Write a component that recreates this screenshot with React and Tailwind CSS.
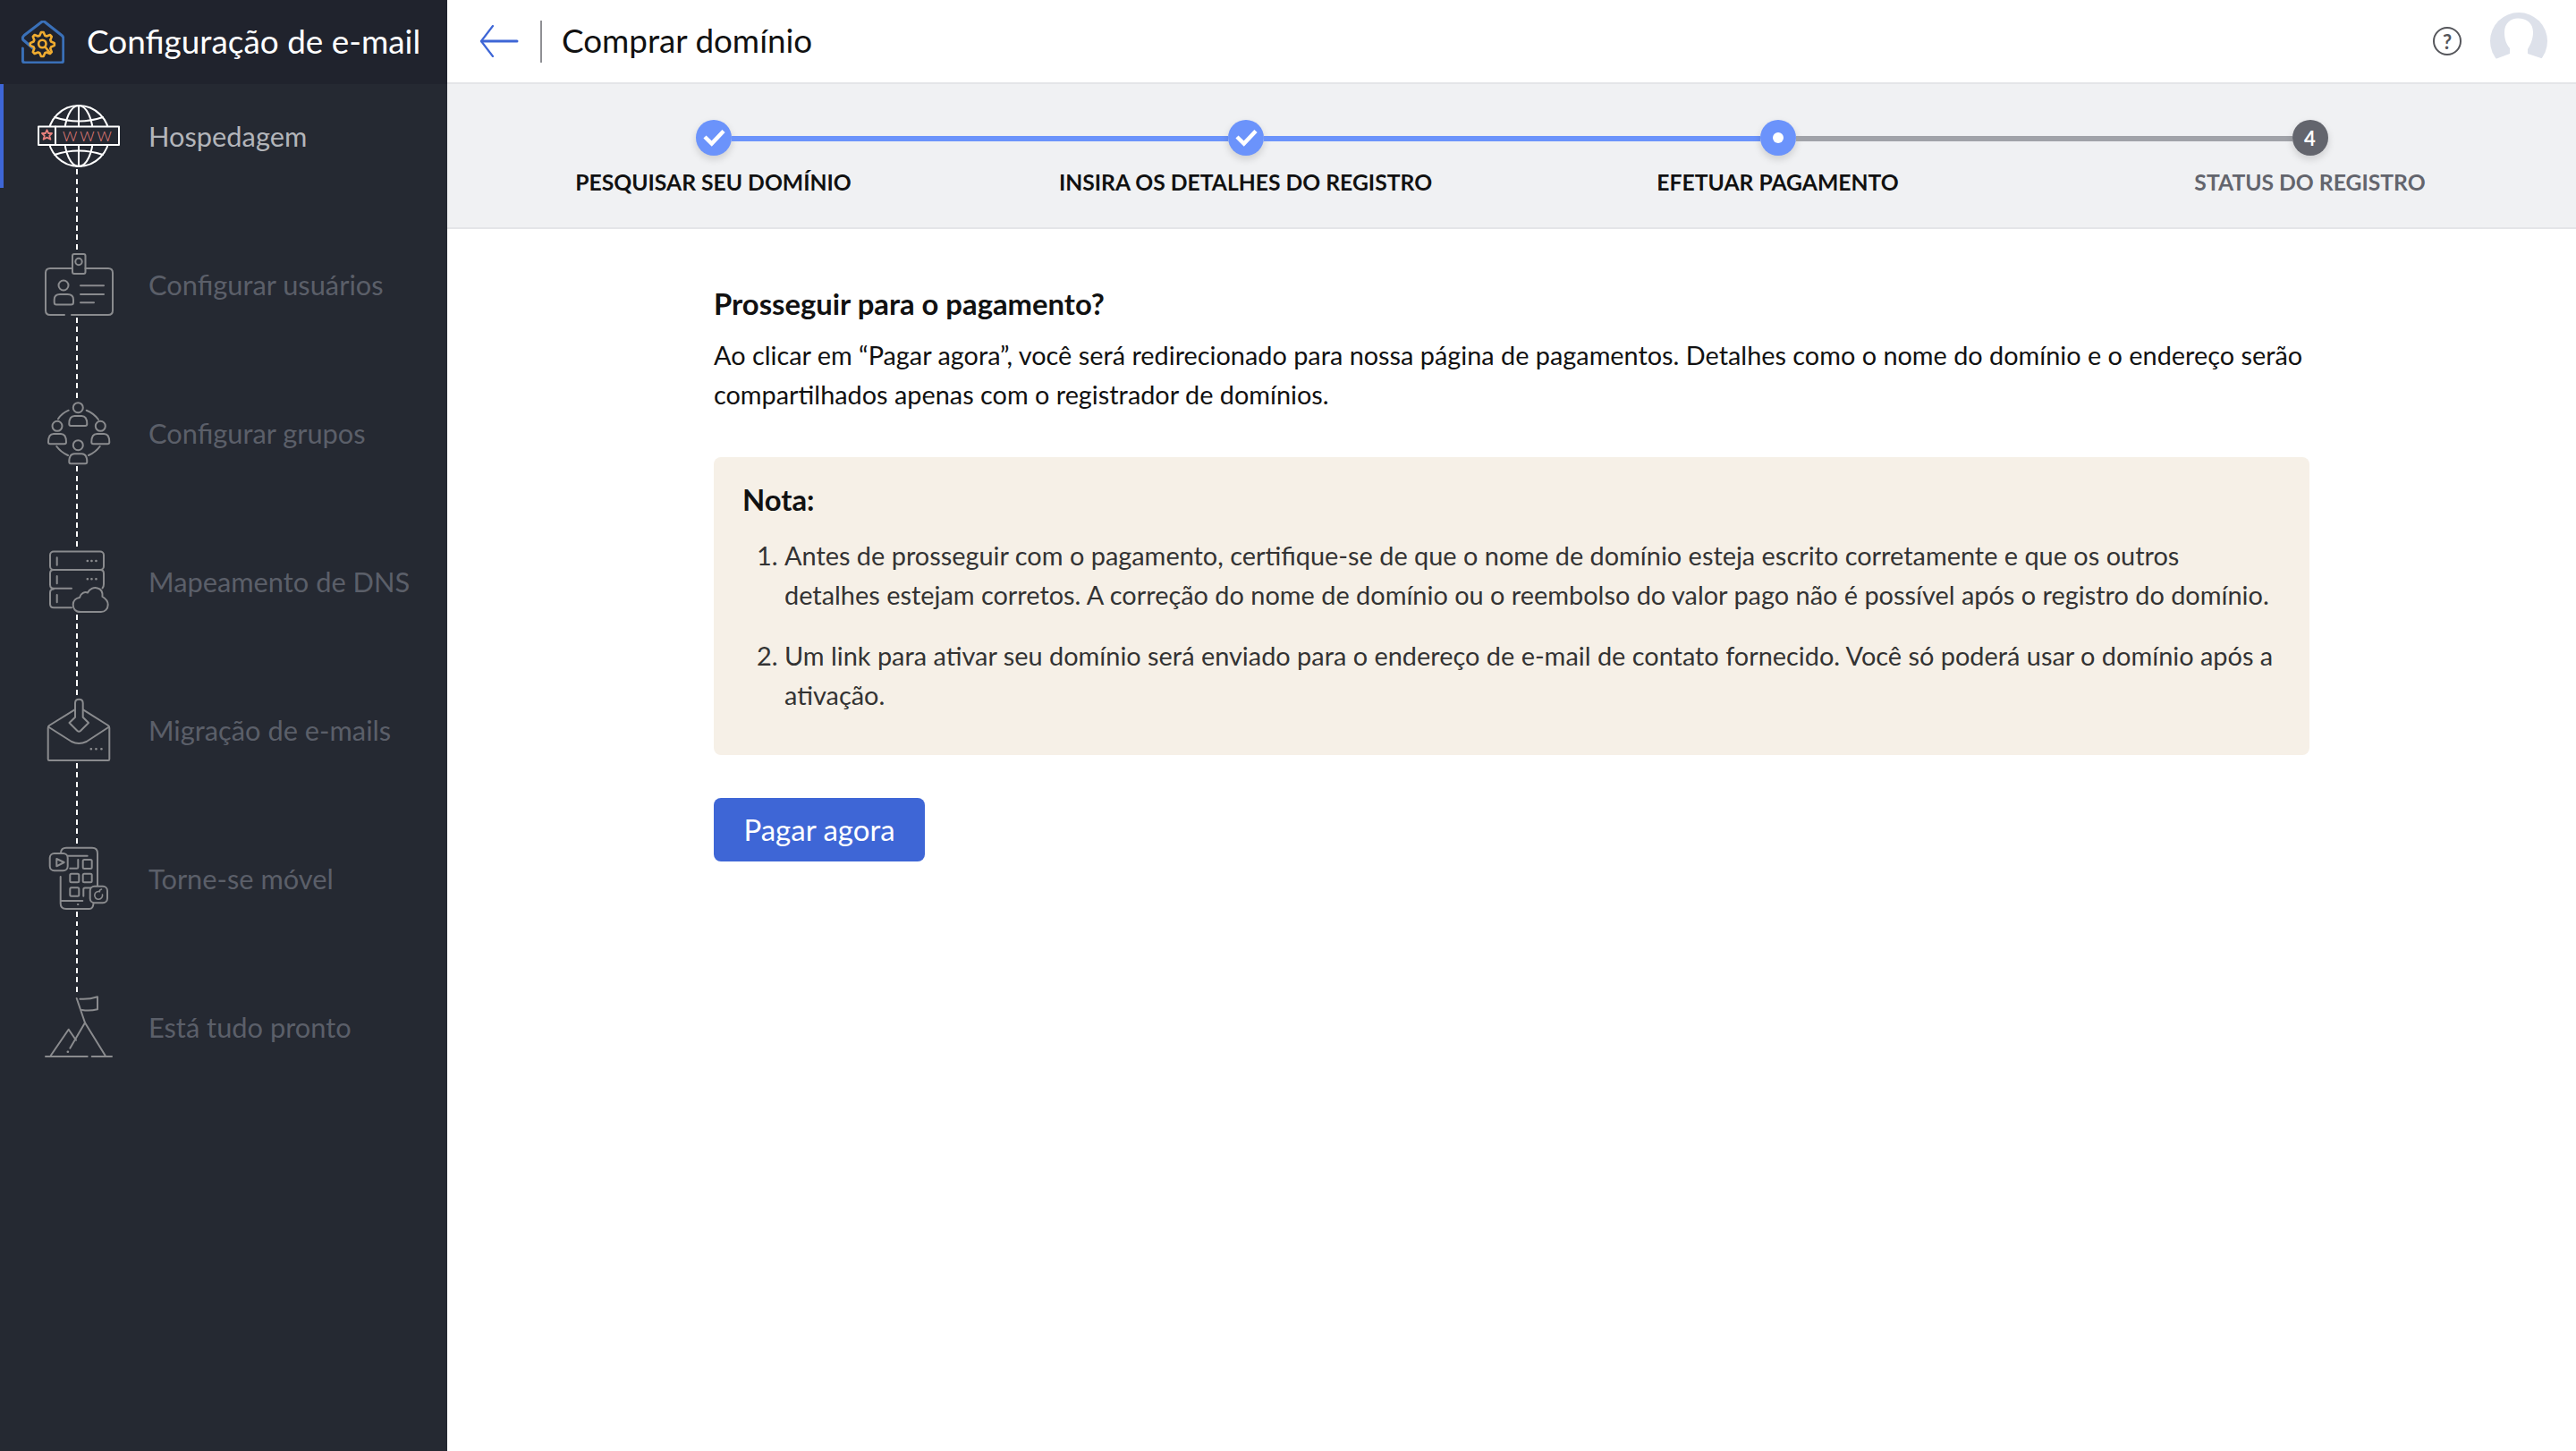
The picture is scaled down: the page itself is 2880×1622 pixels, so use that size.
import React from "react";

const GREY = "#8a8b8e";

function gearPath(cx, cy, rOuter, rInner, teeth) {
  const pts = [];
  const n = teeth * 4;
  for (let i = 0; i < n; i++) {
    const a = (i / n) * Math.PI * 2 - Math.PI / 2 - Math.PI / n;
    const r = i % 4 < 2 ? rOuter : rInner;
    pts.push([cx + r * Math.cos(a), cy + r * Math.sin(a)]);
  }
  return "M" + pts.map((p) => p[0].toFixed(2) + " " + p[1].toFixed(2)).join("L") + "Z";
}

function Logo() {
  return (
    <svg width="48" height="48" viewBox="0 0 48 48" fill="none" className="shrink-0">
      <path d="M1.4 31V44.5Q1.4 47 4 47H44Q46.8 47 46.8 44.5V20Q46.8 18 45 16.5L26 1.5Q24.3 0.4 22.6 1.5L3 16.5Q0.4 19 1.8 21.5L13.5 31.5" stroke="#3a70b8" strokeWidth="3" strokeLinecap="round" strokeLinejoin="round" />
      <path d={gearPath(23.3, 26.5, 13.6, 10.2, 8)} stroke="#f0ac30" strokeWidth="2.6" strokeLinejoin="round" />
      <circle cx="23.3" cy="26" r="4.2" stroke="#f0ac30" strokeWidth="2.6" />
      <path d="M26.5 29.5L31 35" stroke="#f0ac30" strokeWidth="2.6" strokeLinecap="round" />
    </svg>
  );
}

function Svg({ children, stroke = GREY }) {
  return (
    <svg width="100" height="72" viewBox="0 0 100 72" fill="none" stroke={stroke} strokeWidth="2" strokeLinecap="round" strokeLinejoin="round" className="shrink-0">
      {children}
    </svg>
  );
}

function Person({ cx, hy, x1, x2, y1, y2 }) {
  return (
    <>
      <circle cx={cx} cy={hy} r="5.5" />
      <path d={`M${x1 + 6} ${y1}H${x2 - 6}Q${x2} ${y1} ${x2} ${y2 - 2}Q${x2} ${y2} ${x2 - 2} ${y2}H${x1 + 2}Q${x1} ${y2} ${x1} ${y2 - 2}Q${x1} ${y1} ${x1 + 6} ${y1}Z`} />
    </>
  );
}

function IconGlobe() {
  const pink = "#e8807c";
  return (
    <Svg stroke="#ffffff">
      <circle cx="51" cy="36" r="34" />
      <ellipse cx="51" cy="36" rx="16" ry="34" />
      <path d="M51 2V70" />
      <path d="M24 15Q51 24 78 15" />
      <path d="M24 57Q51 48 78 57" />
      <path d="M17 36H85" />
      <rect x="6" y="25.5" width="90" height="20.5" fill="#252932" />
      <path d="M25 25.5V46" />
      <path d={"M15.5 29.3L17.2 33H21L18.2 35.8L19.4 39.8L15.5 37.6L11.6 39.8L12.8 35.8L10 33H13.8Z"} stroke={pink} strokeWidth="1.8" />
      <text x="33" y="42" fill={pink} stroke="none" fontFamily="Lato, sans-serif" fontSize="16" fontWeight="300" letterSpacing="3">WWW</text>
    </Svg>
  );
}

function IconUser() {
  return (
    <Svg>
      <path d="M44 18H19Q14 18 14 23V65Q14 70 19 70H35M43 70H84Q89 70 89 65V23Q89 18 84 18H58.5" />
      <rect x="44" y="2" width="14.5" height="22" rx="2" />
      <circle cx="51" cy="10.5" r="3.7" />
      <circle cx="34" cy="37" r="5.5" />
      <path d="M30 47H38.5Q45 47 45 53V56Q45 58.5 42.5 58.5H26Q23.7 58.5 23.7 56V53Q23.7 47 30 47Z" />
      <path d="M53 37.3H79M53 47H79M53 56.3H68" />
    </Svg>
  );
}

function IconGroup() {
  return (
    <Svg>
      <Person cx={50.3} hy={7.7} x1={40.3} x2={60.3} y1={17} y2={28} />
      <Person cx={27} hy={28.3} x1={17} x2={37} y1={37} y2={48.3} />
      <Person cx={75.3} hy={28.3} x1={65.3} x2={85.3} y1={37} y2={48.3} />
      <Person cx={50.3} hy={49.7} x1={40.3} x2={60.3} y1={59.3} y2={70.3} />
      <path d="M39.7 10.7Q32 14 28 20.3M59.7 10.7Q68 14 73 21M26.3 51Q31 57.5 39 61M74.7 51Q70 57.5 62 61" />
    </Svg>
  );
}

function IconDns() {
  return (
    <Svg>
      <rect x="19" y="2.5" width="60" height="20.5" rx="4" />
      <path d="M23 23H75Q79 23 79 27V39Q79 42 77.5 43.5M23 23Q19 23 19 27V39.5Q19 43.7 23 43.7H43" />
      <path d="M43 65.3H23Q19 65.3 19 61.3V48.5Q19 44.5 23 44.5" />
      <path d="M26.7 9.3V17.7M26.7 30V38.3M26.7 51V59.3" />
      <path d="M60.7 13H61M65.3 13H65.6M70.3 13H70.6M60.7 33.3H61M65.3 33.3H65.6M70.3 33.3H70.6" strokeWidth="2.4" />
      <path d="M53 70C47 70 44.7 66 44.7 62C44.7 57.5 48 54.5 52 54C53 49 58 47 61 48.5C63 44.5 68 42 72 43.5C76 44.5 78 48 77.5 53C81 55 83.7 58 83.7 62C83.7 67 80 70 76 70Z" />
    </Svg>
  );
}

function IconMail() {
  return (
    <Svg>
      <path d="M46.5 13.3L18 31Q16.7 32 16.7 34V68.5Q16.7 70 18 70H84Q85.3 70 85.3 68.5V34Q85.3 32 84 31L56 13.3" />
      <path d="M17 32.5L43 49Q51 53 59.7 49L85 32.5" />
      <path d="M47 21.7V6Q47 1.7 51.3 1.7Q55.7 1.7 55.7 6V21.7L62 28L53 37Q51.3 38.5 49.5 37L40.5 28Z" />
      <path d="M64.7 57.3H65M70.3 57.3H70.6M76.3 57.3H76.6" strokeWidth="2.4" />
    </Svg>
  );
}

function IconMobile() {
  return (
    <Svg>
      <path d="M31 7Q31.5 1.7 37 1.7H66Q72 1.7 72 8V44" />
      <path d="M30.7 34V64Q30.7 70 37 70H63Q67 70 67.5 64" />
      <path d="M34.7 10.7H60.7M31 61H55.3" />
      <path d="M50 65H50.3" strokeWidth="2.2" />
      <rect x="18.7" y="8" width="20" height="19.3" rx="5" fill="#252932" />
      <path d="M26.3 14V22.3L34.7 18Z" />
      <rect x="55.7" y="15" width="10" height="10" rx="1.5" />
      <path d="M50.3 15V23.5Q50.3 24.7 49 24.7H41.3" />
      <rect x="41.3" y="30.7" width="10" height="9.5" rx="1.5" />
      <rect x="55.7" y="30.7" width="10" height="9.5" rx="1.5" />
      <rect x="41.3" y="46.3" width="10" height="9.5" rx="1.5" />
      <path d="M56.3 55.7V48Q56.3 46.5 58 46.5H65" />
      <rect x="63.7" y="44.7" width="19.3" height="18.6" rx="5" fill="#252932" />
      <path d="M74.5 50.7A4.4 4.4 0 1 0 77.5 54M74 50.5Q74.5 48.5 76.5 48" strokeWidth="1.6" />
    </Svg>
  );
}

function IconFlag() {
  return (
    <Svg>
      <path d="M14 69H60.7M65.7 69H88" />
      <path d="M48.7 4L58 31.3" />
      <path d="M52.3 4.7Q62 5.5 72 2.3V16.3Q63 18.5 54.7 17" />
      <path d="M41.3 59.7L58 31.3L80.7 68" />
      <path d="M38.7 63.7H39" strokeWidth="2.4" />
      <path d="M19.7 68L39.7 38.7L48 50.7" />
    </Svg>
  );
}

const items = [
  { label: "Hospedagem", Icon: IconGlobe, active: true },
  { label: "Configurar usuários", Icon: IconUser },
  { label: "Configurar grupos", Icon: IconGroup },
  { label: "Mapeamento de DNS", Icon: IconDns },
  { label: "Migração de e-mails", Icon: IconMail },
  { label: "Torne-se móvel", Icon: IconMobile },
  { label: "Está tudo pronto", Icon: IconFlag, last: true },
];

function NavItem({ label, Icon, active, last }) {
  return (
    <div className="relative flex h-[166px]">
      {active && <div className="absolute left-0 top-[-22px] h-[116px] w-1 bg-[#3e66d6]" />}
      <div className="ml-[37px] flex w-[100px] flex-col items-center">
        <Icon />
        {!last && (
          <div className="mb-[3px] w-[2px] flex-1 translate-x-[-1px] bg-[repeating-linear-gradient(to_bottom,transparent_0,transparent_1px,#ffffff_1px,#ffffff_7px,transparent_7px,transparent_10.5px)]" />
        )}
      </div>
      <div className={`ml-[29px] flex h-[74px] items-center text-[30.8px] ${active ? "text-[#b3b5ba]" : "text-[#5b5f69]"}`}>{label}</div>
    </div>
  );
}

const steps = [
  { label: "PESQUISAR SEU DOMÍNIO", state: "done", left: "", right: "bg-[#6b93fb]" },
  { label: "INSIRA OS DETALHES DO REGISTRO", state: "done", left: "bg-[#6b93fb]", right: "bg-[#6b93fb]" },
  { label: "EFETUAR PAGAMENTO", state: "current", left: "bg-[#6b93fb]", right: "bg-[#a0a2a8]" },
  { label: "STATUS DO REGISTRO", state: "todo", left: "bg-[#a0a2a8]", right: "" },
];

function StepCircle({ state }) {
  if (state === "done") {
    return (
      <div className="flex h-10 w-10 shrink-0 items-center justify-center rounded-full bg-[#6b93fb] shadow-[0_4px_8px_rgba(0,0,0,0.15)]">
        <svg width="40" height="40" viewBox="0 0 40 40" fill="none">
          <path d="M10 19L17.7 26.5L31 12.5" stroke="#fff" strokeWidth="4.5" />
        </svg>
      </div>
    );
  }
  if (state === "current") {
    return (
      <div className="flex h-10 w-10 shrink-0 items-center justify-center rounded-full bg-[#6b93fb] shadow-[0_4px_8px_rgba(0,0,0,0.15)]">
        <div className="h-3 w-3 rounded-full bg-white" />
      </div>
    );
  }
  return (
    <div className="flex h-10 w-10 shrink-0 items-center justify-center rounded-full bg-[#63656d] text-[22px] font-bold text-white shadow-[0_4px_8px_rgba(0,0,0,0.15)]">4</div>
  );
}

function Step({ label, state, left, right }) {
  return (
    <div className="flex flex-col items-center">
      <div className="flex w-full items-center">
        <div className={`mt-[2px] h-[6px] flex-1 ${left}`} />
        <StepCircle state={state} />
        <div className={`mt-[2px] h-[6px] flex-1 ${right}`} />
      </div>
      <div className={`mt-[12px] h-9 text-[24.7px] font-bold leading-9 ${state === "todo" ? "text-[#63656d]" : "text-[#111]"}`}>{label}</div>
    </div>
  );
}

export default function App() {
  return (
    <div className="flex h-screen w-full overflow-hidden bg-white font-['Lato',sans-serif]">
      <aside className="flex w-[500px] shrink-0 flex-col bg-[#252932]">
        <div className="flex h-[94px] items-center gap-[25px] bg-[#20232d] pl-[24px]">
          <Logo />
          <span className="text-[36.9px] text-white">Configuração de e-mail</span>
        </div>
        <nav className="pt-[22px]">
          {items.map((it) => (
            <NavItem key={it.label} {...it} />
          ))}
        </nav>
      </aside>
      <main className="flex min-w-0 flex-1 flex-col">
        <header className="flex h-[94px] items-center border-b-2 border-[#e4e5e8] pr-[32px] pl-[36px]">
          <svg width="44" height="36" viewBox="0 0 44 36" fill="none" className="shrink-0">
            <path d="M15 1L2 18L15 35" stroke="#3e66d6" strokeWidth="2.2" strokeLinecap="round" strokeLinejoin="round" />
            <path d="M2.5 18H42" stroke="#3e66d6" strokeWidth="3" strokeLinecap="round" />
          </svg>
          <div className="ml-[24px] h-[47px] w-[2px] bg-[#8f9094]" />
          <h1 className="ml-[22px] text-[36.8px] text-[#111]">Comprar domínio</h1>
          <div className="ml-auto flex h-8 w-8 items-center justify-center rounded-full border-2 border-[#55565b] text-[22px] font-bold text-[#55565b]">?</div>
          <svg width="64" height="64" viewBox="0 0 64 64" className="ml-[32px] shrink-0">
            <circle cx="32" cy="32" r="32" fill="#dde1ea" />
            <path d="M6 52L22 46V40C17 34 16 28 16 22C16 12 23 6.5 31 6.5C41 6.5 48 12 48 22C48 30 45 36 42 41V46L60 52V64H4V52Z" fill="#fff" />
          </svg>
        </header>
        <div className="grid h-[162px] grid-cols-4 border-b-2 border-[#e4e5e8] bg-[#f0f1f3] pt-[40px]">
          {steps.map((s) => (
            <Step key={s.label} {...s} />
          ))}
        </div>
        <div className="px-[298px] pt-[62px]">
          <h2 className="text-[32.8px] font-bold leading-[44px] text-[#111]">Prosseguir para o pagamento?</h2>
          <p className="mt-[13px] text-[28.85px] leading-[44px] text-[#111]">
            Ao clicar em “Pagar agora”, você será redirecionado para nossa página de pagamentos. Detalhes como o nome do domínio e o endereço serão compartilhados apenas com o registrador de domínios.
          </p>
          <div className="mt-[48px] rounded-lg bg-[#f6f0e7] pt-[26px] pr-[32px] pb-[45px] pl-[32px]">
            <h3 className="text-[32.8px] font-bold leading-[44px] text-[#111]">Nota:</h3>
            <ol className="mt-[18px] list-decimal pl-[47px] text-[28.9px] leading-[44px] text-[#333]">
              <li>Antes de prosseguir com o pagamento, certifique-se de que o nome de domínio esteja escrito corretamente e que os outros detalhes estejam corretos. A correção do nome de domínio ou o reembolso do valor pago não é possível após o registro do domínio.</li>
              <li className="mt-[24px]">Um link para ativar seu domínio será enviado para o endereço de e-mail de contato fornecido. Você só poderá usar o domínio após a ativação.</li>
            </ol>
          </div>
          <button className="mt-[48px] flex h-[71px] w-[236px] items-center justify-center rounded-lg bg-[#3e66d6] text-[33px] text-white">Pagar agora</button>
        </div>
      </main>
    </div>
  );
}
